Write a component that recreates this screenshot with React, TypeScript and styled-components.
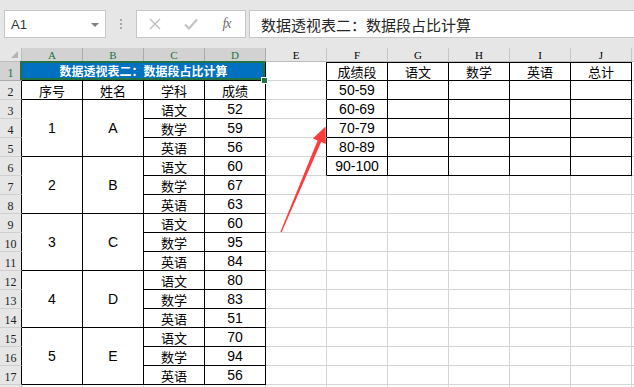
import React from 'react';
import styled, { createGlobalStyle, css } from 'styled-components';

const Global = createGlobalStyle`
  html, body { margin: 0; padding: 0; background: #ffffff; overflow: hidden; }
  body { font-family: "Noto Sans CJK SC", sans-serif; }
`;

const Page = styled.div`
  position: relative;
  width: 634px;
  height: 387px;
  overflow: hidden;
  background: #e6e6e6;
`;

const FormulaBar = styled.div`
  box-sizing: border-box;
  height: 48px;
  padding: 10px 0 0 4px;
  display: flex;
  align-items: flex-start;
  background: #e6e6e6;
`;

const NameBox = styled.div`
  box-sizing: border-box;
  width: 102px;
  height: 28px;
  background: #fff;
  border: 1px solid #c6c6c6;
  display: flex;
  align-items: center;
  justify-content: space-between;
  padding: 0 6px 0 6px;
  font-family: "Liberation Sans", Arial, sans-serif;
  font-size: 13px;
  color: #333;
`;

const Caret = styled.span`
  width: 0;
  height: 0;
  border-left: 4px solid transparent;
  border-right: 4px solid transparent;
  border-top: 4px solid #808080;
  margin-top: 1px;
`;

const Grip = styled.div`
  width: 30px;
  height: 28px;
  display: flex;
  flex-direction: column;
  align-items: center;
  justify-content: center;
  gap: 2px;
  & > i {
    display: block;
    width: 2px;
    height: 2px;
    background: #a6a6a6;
  }
`;

const ButtonBox = styled.div`
  box-sizing: border-box;
  width: 110px;
  height: 28px;
  background: #fff;
  border: 1px solid #c6c6c6;
  display: grid;
  grid-template-columns: 36px 36px 36px;
  align-items: center;
  justify-items: center;
  margin-right: 3px;
`;

const Fx = styled.span`
  font-family: "Liberation Serif", serif;
  font-style: italic;
  font-size: 14px;
  color: #6e6e6e;
  letter-spacing: -1px;
  margin-left: -1px;
`;

const FormulaInput = styled.div`
  box-sizing: border-box;
  flex: 1;
  height: 28px;
  background: #fff;
  border: 1px solid #c6c6c6;
  border-right: none;
  display: flex;
  align-items: center;
  padding-left: 11px;
  font-family: "Noto Sans CJK SC", sans-serif;
  font-size: 15px;
  color: #262626;
  white-space: nowrap;
`;

const Sheet = styled.div`
  display: grid;
  grid-template-columns: 22px repeat(11, 61px);
  grid-template-rows: 14px repeat(18, 19px);
  background: #fff;
`;

const Corner = styled.div`
  box-sizing: border-box;
  background: #e6e6e6;
  border-right: 1px solid #bdbdbd;
  border-bottom: 1px solid #bdbdbd;
  display: flex;
  align-items: flex-end;
  justify-content: flex-end;
  padding: 0 3px 3px 0;
  &::after {
    content: '';
    width: 0;
    height: 0;
    border-left: 7px solid transparent;
    border-bottom: 7px solid #b4b4b4;
  }
`;

const ColHead = styled.div<{ $sel?: boolean }>`
  box-sizing: border-box;
  background: ${p => (p.$sel ? '#d2d2d2' : '#e6e6e6')};
  border-right: 1px solid ${p => (p.$sel ? '#ababab' : '#c6c6c6')};
  border-bottom: 1px solid ${p => (p.$sel ? '#217346' : '#bdbdbd')};
  display: flex;
  align-items: flex-end;
  justify-content: center;
  font-family: "Liberation Serif", serif;
  font-size: 11px;
  line-height: 1;
  color: ${p => (p.$sel ? '#217346' : '#000')};
`;

const RowHead = styled.div<{ $sel?: boolean; $edge?: boolean }>`
  box-sizing: border-box;
  background: ${p => (p.$sel ? '#d2d2d2' : '#e6e6e6')};
  border-right: 1px solid ${p => (p.$sel ? '#217346' : p.$edge ? '#000' : '#bdbdbd')};
  border-bottom: 1px solid ${p => (p.$sel ? '#ababab' : '#cfcfcf')};
  display: flex;
  align-items: flex-end;
  justify-content: center;
  padding-bottom: 1px;
  font-family: "Liberation Serif", serif;
  font-size: 12px;
  line-height: 1;
  color: ${p => (p.$sel ? '#217346' : '#222')};
`;

type CellProps = {
  $r?: boolean;
  $b?: boolean;
  $t?: boolean;
  $cjk?: boolean;
  $rows?: number;
};

const Cell = styled.div<CellProps>`
  box-sizing: border-box;
  min-width: 0;
  display: flex;
  align-items: center;
  justify-content: center;
  background: #fff;
  border-right: 1px solid ${p => (p.$r ? '#000' : '#d4d4d4')};
  border-bottom: 1px solid ${p => (p.$b ? '#000' : '#d4d4d4')};
  ${p => p.$t && css`box-shadow: inset 0 1px 0 #000;`}
  ${p => p.$rows && css`grid-row: span ${p.$rows};`}
  font-family: ${p => (p.$cjk ? '"Noto Sans CJK SC", sans-serif' : '"Liberation Sans", Arial, "Noto Sans CJK SC", sans-serif')};
  font-size: ${p => (p.$cjk ? '13px' : '14px')};
  line-height: 1;
  color: #000;
  white-space: nowrap;
`;

const TitleCell = styled.div`
  position: relative;
  grid-column: span 4;
  box-sizing: border-box;
  display: flex;
  align-items: center;
  justify-content: center;
  background: #0070c0;
  border-right: 1px solid #000;
  border-bottom: 1px solid #000;
  font-family: "Noto Sans CJK SC", sans-serif;
  font-weight: 700;
  font-size: 12px;
  line-height: 1;
  color: #fff;
  white-space: nowrap;
`;

const Selection = styled.div`
  position: absolute;
  left: -2px;
  top: -1px;
  right: 0;
  bottom: 0;
  border: 2px solid #217346;
  pointer-events: none;
  &::after {
    content: '';
    position: absolute;
    right: -5px;
    bottom: -6px;
    width: 5px;
    height: 5px;
    background: #217346;
    border: 1px solid #fff;
  }
`;

const Arrow = styled.svg`
  position: absolute;
  left: 0;
  top: 0;
  pointer-events: none;
`;

const groups = [
  { n: '1', name: 'A', scores: ['52', '59', '56'] },
  { n: '2', name: 'B', scores: ['60', '67', '63'] },
  { n: '3', name: 'C', scores: ['60', '95', '84'] },
  { n: '4', name: 'D', scores: ['80', '83', '51'] },
  { n: '5', name: 'E', scores: ['70', '94', '56'] },
];
const subjects = ['语文', '数学', '英语'];
const bands = ['50-59', '60-69', '70-79', '80-89', '90-100'];
const fHeads = ['成绩段', '语文', '数学', '英语', '总计'];
const letters = ['A', 'B', 'C', 'D', 'E', 'F', 'G', 'H', 'I', 'J', ''];

function leftCells(r: number): React.ReactNode[] {
  if (r === 1) {
    return [
      <TitleCell key="t">
        数据透视表二：数据段占比计算
        <Selection />
      </TitleCell>,
    ];
  }
  if (r === 2) {
    return ['序号', '姓名', '学科', '成绩'].map(h => (
      <Cell key={h} $r $b $cjk>
        {h}
      </Cell>
    ));
  }
  if (r >= 3 && r <= 17) {
    const g = Math.floor((r - 3) / 3);
    const i = (r - 3) % 3;
    const grp = groups[g];
    const out: React.ReactNode[] = [];
    if (i === 0) {
      out.push(
        <Cell key="a" $r $b $rows={3}>
          {grp.n}
        </Cell>,
        <Cell key="b" $r $b $rows={3}>
          {grp.name}
        </Cell>
      );
    }
    out.push(
      <Cell key="c" $r $b $cjk>
        {subjects[i]}
      </Cell>,
      <Cell key="d" $r $b>
        {grp.scores[i]}
      </Cell>
    );
    return out;
  }
  return [0, 1, 2, 3].map(k => <Cell key={k} />);
}

function rightCells(r: number): React.ReactNode[] {
  const out: React.ReactNode[] = [<Cell key="e" $r={r <= 6} />];
  for (let i = 0; i < 5; i++) {
    if (r <= 6) {
      const txt = r === 1 ? fHeads[i] : i === 0 ? bands[r - 2] : '';
      out.push(
        <Cell key={'f' + i} $r $b $t={r === 1} $cjk={r === 1}>
          {txt}
        </Cell>
      );
    } else {
      out.push(<Cell key={'f' + i} />);
    }
  }
  out.push(<Cell key="k" />);
  return out;
}

export default function App() {
  const rows = Array.from({ length: 18 }, (_, k) => k + 1);
  return (
    <Page>
      <Global />
      <FormulaBar>
        <NameBox>
          <span>A1</span>
          <Caret />
        </NameBox>
        <Grip>
          <i />
          <i />
          <i />
        </Grip>
        <ButtonBox>
          <svg width="12" height="12" viewBox="0 0 12 12">
            <path d="M1 1 L11 11 M11 1 L1 11" stroke="#bcbcbc" strokeWidth="1.3" fill="none" />
          </svg>
          <svg width="14" height="12" viewBox="0 0 14 12">
            <path d="M1 6.5 L5 10.5 L13 1.5" stroke="#c4c4c4" strokeWidth="2.2" fill="none" />
          </svg>
          <Fx>fx</Fx>
        </ButtonBox>
        <FormulaInput>数据透视表二：数据段占比计算</FormulaInput>
      </FormulaBar>
      <Sheet>
        <Corner />
        {letters.map((l, i) => (
          <ColHead key={i} $sel={i < 4}>
            {l}
          </ColHead>
        ))}
        {rows.map(r => (
          <React.Fragment key={r}>
            <RowHead $sel={r === 1} $edge={r >= 2 && r <= 17}>
              {r <= 17 ? r : ''}
            </RowHead>
            {leftCells(r)}
            {rightCells(r)}
          </React.Fragment>
        ))}
      </Sheet>
      <Arrow width="634" height="387" viewBox="0 0 634 387">
        <polygon
          points="280.4,231.8 317.6,140.5 312.9,138.6 325.5,126.5 325.9,144.0 321.2,142.1 281.6,232.2"
          fill="#ff3b3b"
        />
      </Arrow>
    </Page>
  );
}
